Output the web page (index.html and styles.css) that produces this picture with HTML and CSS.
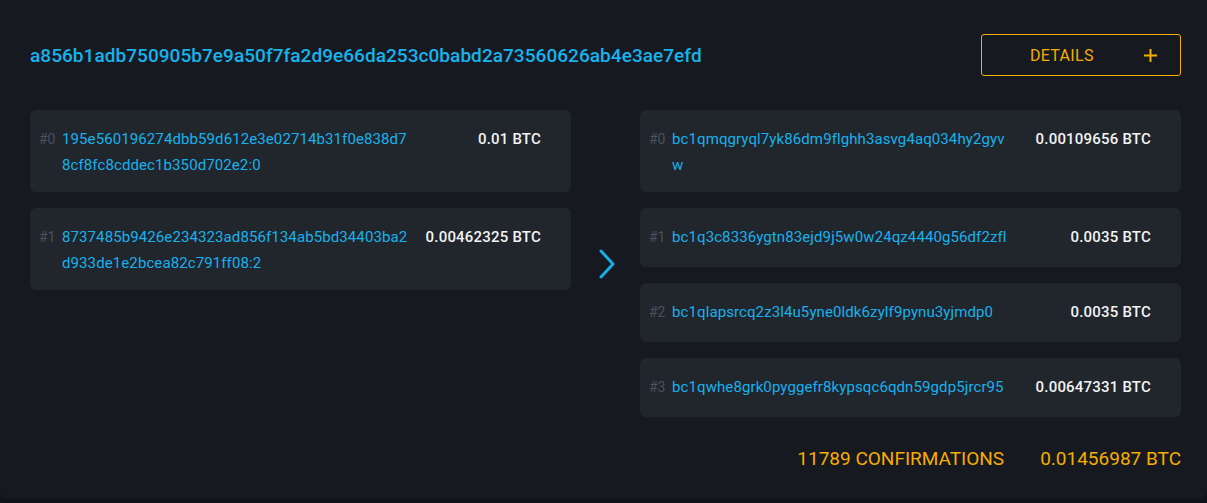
FILE: index.html
```html
<!DOCTYPE html>
<html lang="en">
<head>
<meta charset="utf-8">
<title>Transaction</title>
<link rel="stylesheet" href="styles.css">
</head>
<body>
<div class="panel">
  <header class="tx-header">
    <a class="tx-id">a856b1adb750905b7e9a50f7fa2d9e66da253c0babd2a73560626ab4e3ae7efd</a>
    <button class="details-btn">
      <span>DETAILS</span>
      <svg class="plus" width="13" height="13" viewBox="0 0 13 13"><path d="M6.5 0v13M0 6.5h13" stroke="#f5ad00" stroke-width="2" fill="none"/></svg>
    </button>
  </header>

  <div class="io">
    <div class="col">
      <div class="row">
        <span class="idx">#0</span>
        <span class="hash">195e560196274dbb59d612e3e02714b31f0e838d78cf8fc8cddec1b350d702e2:0</span>
        <span class="amt">0.01 BTC</span>
      </div>
      <div class="row">
        <span class="idx">#1</span>
        <span class="hash">8737485b9426e234323ad856f134ab5bd34403ba2d933de1e2bcea82c791ff08:2</span>
        <span class="amt">0.00462325 BTC</span>
      </div>
    </div>

    <div class="arrow">
      <svg width="16" height="30" viewBox="0 0 16 30"><path d="M2 2l12 13L2 28" stroke="#12aee8" stroke-width="3" fill="none" stroke-linecap="round" stroke-linejoin="round"/></svg>
    </div>

    <div class="col">
      <div class="row">
        <span class="idx">#0</span>
        <span class="hash">bc1qmqgryql7yk86dm9flghh3asvg4aq034hy2gyv<br>w</span>
        <span class="amt">0.00109656 BTC</span>
      </div>
      <div class="row">
        <span class="idx">#1</span>
        <span class="hash">bc1q3c8336ygtn83ejd9j5w0w24qz4440g56df2zfl</span>
        <span class="amt">0.0035 BTC</span>
      </div>
      <div class="row">
        <span class="idx">#2</span>
        <span class="hash">bc1qlapsrcq2z3l4u5yne0ldk6zylf9pynu3yjmdp0</span>
        <span class="amt">0.0035 BTC</span>
      </div>
      <div class="row">
        <span class="idx">#3</span>
        <span class="hash">bc1qwhe8grk0pyggefr8kypsqc6qdn59gdp5jrcr95</span>
        <span class="amt">0.00647331 BTC</span>
      </div>
    </div>
  </div>

  <footer class="tx-footer">
    <span>11789 CONFIRMATIONS</span>
    <span>0.01456987 BTC</span>
  </footer>
</div>
</body>
</html>
```
FILE: styles.css
```css
* { box-sizing: border-box; }
html, body {
  margin: 0;
  padding: 0;
  background: #111318;
  font-family: Roboto, "Liberation Sans", sans-serif;
}
.panel {
  background: #16191f;
  height: 498px;
  border-radius: 0 0 6px 6px;
  padding: 34px 26px 0 30px;
}
.tx-header {
  display: flex;
  align-items: center;
  justify-content: space-between;
  height: 42px;
}
.tx-id {
  color: #15b4ee;
  font-size: 19px;
  font-weight: 500;
  letter-spacing: 0.05px;
}
.details-btn {
  width: 200px;
  height: 42px;
  background: transparent;
  border: 1px solid #f5ad00;
  border-radius: 3px;
  display: flex;
  align-items: center;
  justify-content: space-between;
  padding: 0 23px 0 48px;
  color: #f5ad00;
  font-family: Roboto, "Liberation Sans", sans-serif;
  font-size: 16px;
  letter-spacing: 0.3px;
}
.plus { display: block; }
.io {
  display: grid;
  grid-template-columns: 1fr 69px 1fr;
  margin-top: 34px;
}
.col {
  display: flex;
  flex-direction: column;
  gap: 16px;
}
.row {
  background: #21252c;
  border-radius: 6px;
  min-height: 59px;
  padding: 16px 30px 14px 9px;
  display: flex;
  align-items: flex-start;
  line-height: 26px;
  font-size: 15px;
}
.idx {
  width: 23px;
  flex: none;
  color: #4a515d;
  font-size: 14px;
}
.hash {
  flex: 1;
  min-width: 0;
  color: #16b2ec;
  word-break: break-all;
  letter-spacing: 0.1px;
}
.amt {
  flex: none;
  width: 116px;
  text-align: right;
  margin-left: 14px;
  color: #f2f3f5;
  font-weight: 500;
  letter-spacing: 0.2px;
}
.arrow {
  display: flex;
  align-items: center;
  justify-content: center;
  padding-left: 3px;
}
.arrow svg { display: block; }
.tx-footer {
  display: flex;
  justify-content: flex-end;
  gap: 36px;
  margin-top: 30px;
  color: #f5ad00;
  font-size: 19px;
  line-height: 24px;
}
```
